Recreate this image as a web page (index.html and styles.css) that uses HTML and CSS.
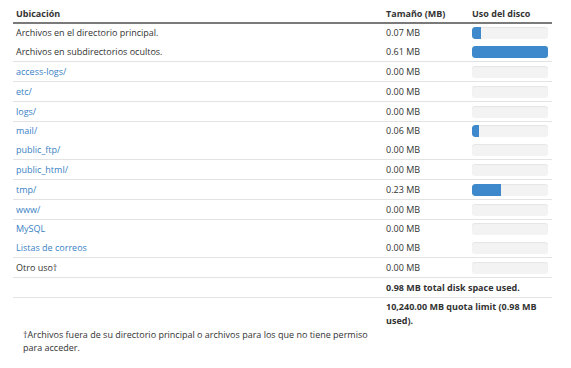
FILE: index.html
```html
<!DOCTYPE html>
<html lang="es">
<head>
<meta charset="utf-8">
<title>Uso del disco</title>
<link rel="stylesheet" href="styles.css">
</head>
<body>
<div class="page">
  <table class="usage">
    <colgroup>
      <col class="c-loc">
      <col class="c-size">
      <col class="c-bar">
    </colgroup>
    <thead>
      <tr><th>Ubicación</th><th>Tamaño (MB)</th><th>Uso del disco</th></tr>
    </thead>
    <tbody>
      <tr class="nb"><td>Archivos en el directorio principal.</td><td>0.07 MB</td><td><div class="bar"><div class="fill" style="width:11.5%"></div></div></td></tr>
      <tr><td>Archivos en subdirectorios ocultos.</td><td>0.61 MB</td><td><div class="bar"><div class="fill" style="width:100%"></div></div></td></tr>
      <tr><td><a href="#">access-logs/</a></td><td>0.00 MB</td><td><div class="bar"></div></td></tr>
      <tr><td><a href="#">etc/</a></td><td>0.00 MB</td><td><div class="bar"></div></td></tr>
      <tr><td><a href="#">logs/</a></td><td>0.00 MB</td><td><div class="bar"></div></td></tr>
      <tr class="nb"><td><a href="#">mail/</a></td><td>0.06 MB</td><td><div class="bar"><div class="fill" style="width:9.8%"></div></div></td></tr>
      <tr><td><a href="#">public_ftp/</a></td><td>0.00 MB</td><td><div class="bar"></div></td></tr>
      <tr><td><a href="#">public_html/</a></td><td>0.00 MB</td><td><div class="bar"></div></td></tr>
      <tr><td><a href="#">tmp/</a></td><td>0.23 MB</td><td><div class="bar"><div class="fill" style="width:37.7%"></div></div></td></tr>
      <tr><td><a href="#">www/</a></td><td>0.00 MB</td><td><div class="bar"></div></td></tr>
      <tr class="nb"><td><a href="#">MySQL</a></td><td>0.00 MB</td><td><div class="bar"></div></td></tr>
      <tr><td><a href="#">Listas de correos</a></td><td>0.00 MB</td><td><div class="bar"></div></td></tr>
      <tr><td>Otro uso†</td><td>0.00 MB</td><td><div class="bar"></div></td></tr>
      <tr class="total"><td></td><td colspan="2">0.98 MB total disk space used.</td></tr>
      <tr class="quota nb"><td></td><td colspan="2">10,240.00 MB quota limit (0.98 MB used).</td></tr>
    </tbody>
  </table>
  <p class="note">†Archivos fuera de su directorio principal o archivos para los que no tiene permiso para acceder.</p>
</div>
</body>
</html>
```

FILE: styles.css
```css
html, body {
  margin: 0;
  padding: 0;
  background: #ffffff;
}

body {
  font-family: "Open Sans", "DejaVu Sans", sans-serif;
  font-size: 9px;
  color: #333333;
}

.page {
  padding: 4px 19px 0 13px;
}

.usage {
  width: 539px;
  border-collapse: collapse;
  table-layout: fixed;
}

.c-loc { width: 370px; }
.c-size { width: 86px; }
.c-bar { width: 83px; }

.usage th {
  text-align: left;
  font-weight: 700;
  padding: 3px 3px 1px;
  height: 14px;
  line-height: 14px;
  border-bottom: 2px solid #7a7a7a;
}

.usage td {
  padding: 0 3px;
  height: 19px;
  line-height: 14px;
  border-bottom: 1px solid #e3e3e3;
  vertical-align: middle;
}

.usage tr.nb td {
  border-bottom: 0;
  height: 18px;
}

.usage a {
  color: #3a82c4;
  text-decoration: none;
}

.bar {
  width: 76px;
  height: 12px;
  border-radius: 3px;
  background: #f3f3f3;
  box-shadow: inset 0 1px 1px rgba(0, 0, 0, 0.06);
  overflow: hidden;
}

.fill {
  height: 100%;
  background: #3d89cb;
  border-radius: 3px 0 0 3px;
}

.usage tr.total td,
.usage tr.quota td {
  font-weight: 700;
}

.usage tr.quota td {
  height: auto;
  padding-top: 2px;
  padding-bottom: 0;
  line-height: 14px;
  vertical-align: top;
}

.note {
  margin: 0 0 0 10px;
  width: 345px;
  line-height: 13px;
}
```
